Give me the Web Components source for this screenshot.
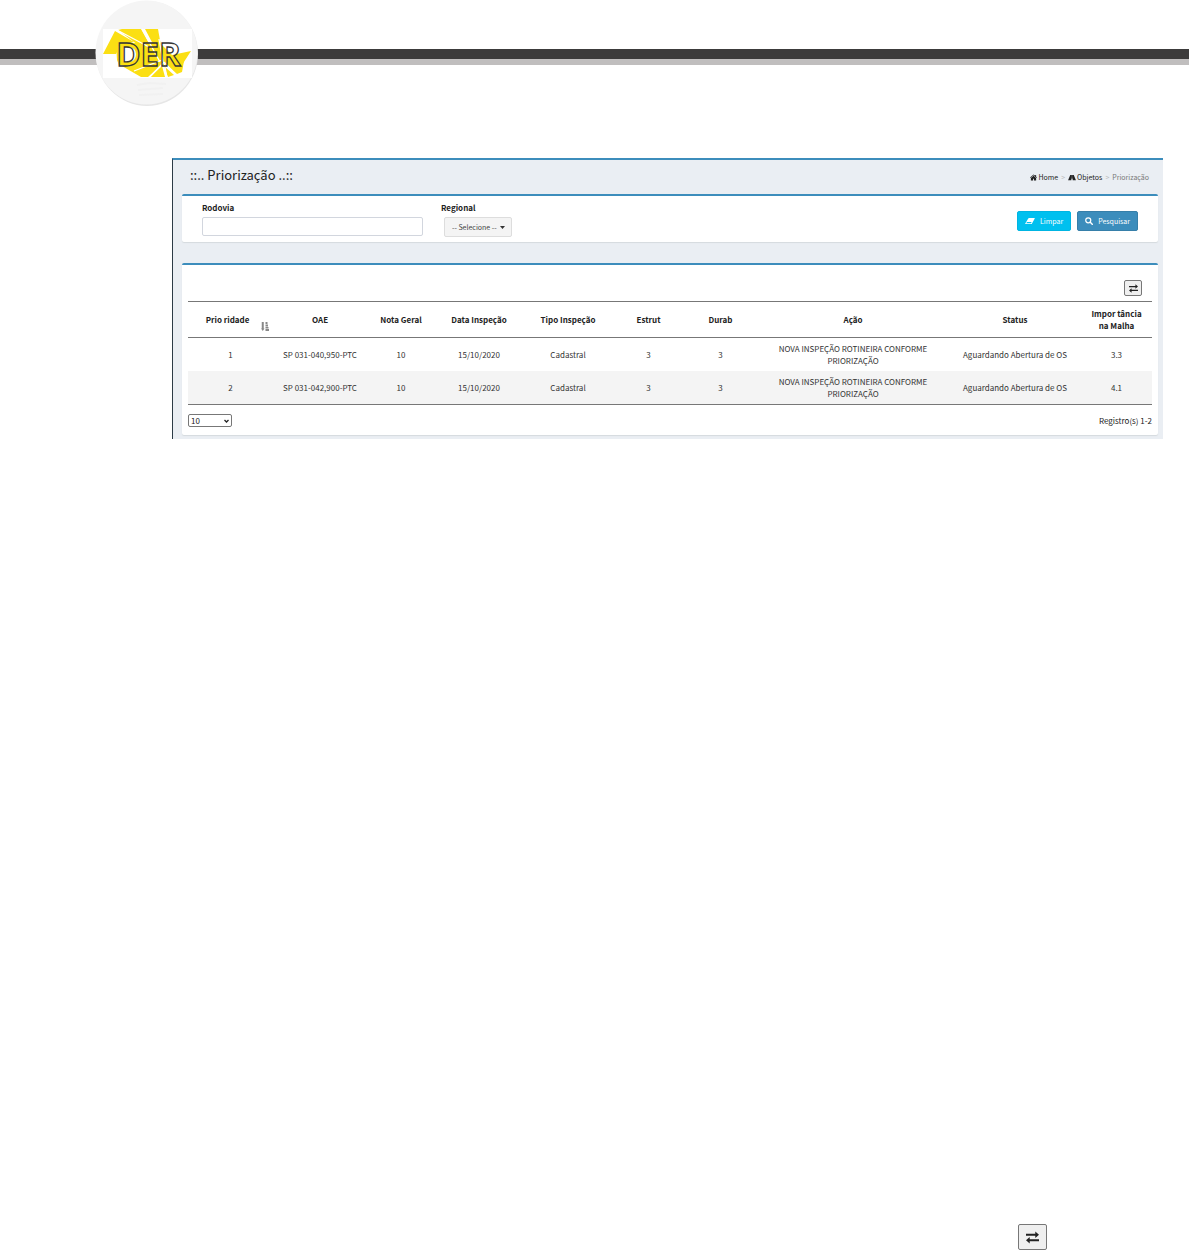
<!DOCTYPE html>
<html lang="pt-BR">
<head>
<meta charset="utf-8">
<meta name="viewport" content="width=device-width, initial-scale=1">
<title>Priorização</title>
<style>
body { margin: 0; background: #fff; color: #222; font: 8px/12px "Noto Sans CJK JP", "Noto Sans", sans-serif; }
</style>
</head>
<body>
<der-page>
  <der-banner slot="banner"></der-banner>
  <der-panel heading="::.. Priorização ..::">
    <der-breadcrumb slot="trail"></der-breadcrumb>
    <der-box><der-filter></der-filter></der-box>
    <der-box><der-results></der-results></der-box>
  </der-panel>
  <swap-button slot="footer" size="large"></swap-button>
</der-page>
<script>
const define = (name, html, setup) => customElements.define(name, class extends HTMLElement {
  connectedCallback() {
    if (this.shadowRoot) return;
    const t = document.createElement('template');
    t.innerHTML = '<style>*{box-sizing:border-box}svg{display:block}button,input,select{font:inherit;color:inherit;margin:0}</style>' + html;
    this.attachShadow({ mode: 'open' }).append(t.content.cloneNode(true));
    if (setup) setup(this, this.shadowRoot);
  }
});

define('der-page', `
<style>
:host { display: flex; flex-direction: column; min-height: 100vh; }
main { padding: 52px 26px 0 172px; }
footer { margin-top: auto; display: flex; justify-content: flex-end; padding-right: 142px; }
</style>
<slot name="banner"></slot>
<main><slot></slot></main>
<footer><slot name="footer"></slot></footer>`);

define('der-banner', `
<style>
:host { display: grid; align-items: start; }
.bar, svg { grid-area: 1 / 1; }
.bar { margin-top: 49px; height: 16px; background: #3c3b3b; border-bottom: 6px solid #c0bebe; }
svg { margin-left: 94px; }
</style>
<div class="bar"></div>
<svg width="106" height="106" viewBox="94 0 106 106" role="img" aria-label="DER">
  <ellipse cx="147" cy="53.500" rx="51" ry="52.500" fill="#e6e6e6"/>
  <ellipse cx="146.500" cy="52.500" rx="51" ry="52" fill="#f5f5f5"/>
  <rect x="103" y="29" width="89" height="49" fill="#fff"/>
  <g fill="#fbdf13">
    <path d="M103 54L115 31L134 42L120 46L116 54Z"/>
    <path d="M118 30L122 29H141L150 45H138Z"/>
    <path d="M145 29H158L161 46L153 44Z"/>
    <path d="M116 43H160L172 55L191 51L182 65H119L117 60Z"/>
    <path d="M122 66L160 50L162 64L148 77H141Z"/>
    <path d="M150 77L162 66L165 77Z"/>
    <path d="M164 66L174 75L168 77Z"/>
    <path d="M166 64L184 61L182 72L177 74Z"/>
  </g>
  <path d="M117 30L149 47M142 29L160 62M134 71L162 60M149 78L164 62M167 78L164 62M176 75L164 62M159 39L163 62" stroke="#fff" stroke-width="1.300" fill="none"/>
  <path d="M124 47H129Q136 48 136 54Q136 61 129 62H124Z" fill="#fff"/>
  <text x="148.500" y="66" text-anchor="middle" font-family="Open Sans, Liberation Sans, sans-serif" font-weight="700" font-size="33" fill="none" stroke="#363636" stroke-width="1.300">DER</text>
  <path d="M137 85l12-2 17 1M138 90l25-2M139 95l24-1" stroke="#f1f1f1" stroke-width="2" fill="none"/>
</svg>`);

define('der-panel', `
<style>
:host { display: block; background: #eaeef3; border-top: 2px solid #3c8dbc; border-left: 1px solid #2c3b46; padding: 0 5px 4px 9px; }
header { display: flex; align-items: center; justify-content: space-between; height: 34px; padding: 0 9px 0 8px; }
h1 { margin: 0; font-size: 13px; line-height: 20px; font-weight: 400; padding-bottom: 4px; }
.boxes { display: flex; flex-direction: column; gap: 21px; }
</style>
<header><h1></h1><slot name="trail"></slot></header>
<div class="boxes"><slot></slot></div>`, (el, root) => {
  root.querySelector('h1').textContent = el.getAttribute('heading');
});

define('der-box', `
<style>
:host { display: block; background: #fff; border-top: 2px solid #3c8dbc; border-radius: 2px; box-shadow: 0 1px 1px #d5dade; }
</style><slot></slot>`);

define('der-breadcrumb', `
<style>
:host { display: block; font-size: 7px; }
nav, a { display: flex; align-items: center; }
nav { gap: 3px; }
a { color: #222; text-decoration: none; gap: 1px; }
i { color: #bbb; font-style: normal; }
span { color: #777; }
</style>
<nav aria-label="Trilha">
  <a href="#home"><svg width="7" height="7" viewBox="0 0 16 16" fill="#222"><path d="M8 1L0 8l1 1 7-6 7 6 1-1-2-2V2h-2v2z"/><path d="M8 4L2 9v6h5v-4h2v4h5V9z"/></svg>Home</a>
  <i>&gt;</i>
  <a href="#objetos"><svg width="8" height="7" viewBox="0 0 18 16" fill="#222"><path fill-rule="evenodd" d="M5 2h3.600v2h.8V2H13l5 12h-7.500v-4h-3v4H0zM8.500 5.500L8.200 8h1.600l-.3-2.500z"/></svg>Objetos</a>
  <i>&gt;</i>
  <span>Priorização</span>
</nav>`);

define('der-filter', `
<style>
:host { display: block; }
form { display: flex; align-items: flex-start; height: 46px; padding: 6px 20px 0; }
.field { display: flex; flex-direction: column; gap: 3px; }
.rodovia { width: 221px; margin-right: 18px; }
label { font-weight: 700; }
input { height: 19px; width: 100%; border: 1px solid #d2d6de; border-radius: 2px; background: #fff; padding: 0 6px; }
.pick { display: grid; align-items: center; margin-left: 3px; width: 68px; }
.pick > * { grid-area: 1 / 1; }
.pick svg { justify-self: end; margin-right: 7px; pointer-events: none; }
select { appearance: none; height: 20px; width: 100%; padding: 0 7px; border: 1px solid #ddd; border-radius: 2px; background: #f4f4f4; color: #444; font-size: 7px; }
.actions { margin: 9px 0 0 auto; display: flex; gap: 6px; }
button { display: flex; align-items: center; gap: 5px; height: 20px; padding: 0 7px; border: 1px solid #00b5e2; border-radius: 2px; background: #00c0ef; color: #fff; font-size: 7px; }
button.search { background: #3c8dbc; border-color: #367fa9; }
</style>
<form>
  <div class="field rodovia"><label for="rodovia">Rodovia</label><input id="rodovia" type="text"></div>
  <div class="field"><label for="regional">Regional</label>
    <div class="pick"><select id="regional"><option>-- Selecione --</option></select>
    <svg width="5" height="3" viewBox="0 0 5 3"><path d="M0 0h5L2.500 3z" fill="#333"/></svg></div></div>
  <div class="actions">
    <button type="button"><svg width="10" height="8" viewBox="0 0 20 16"><path d="M8 2h11q1 0 .5 1L14 13q-.5 1-1.500 1H1q-1 0-.5-1L6.500 3Q7 2 8 2zM2.500 12.500h9L13.500 10H4z" fill="#fff" fill-rule="evenodd"/></svg>Limpar</button>
    <button type="button" class="search"><svg width="8" height="8" viewBox="0 0 16 16" fill="none" stroke="#fff"><circle cx="6.500" cy="6.500" r="5" stroke-width="2.500"/><path d="M10.500 10.500l4 4" stroke-width="3" stroke-linecap="round"/></svg>Pesquisar</button>
  </div>
</form>`);

define('swap-button', `
<style>
:host { display: block; --w: 18px; --h: 16px; --i: 9px; }
:host([size="large"]) { --w: 29px; --h: 26px; --i: 13px; }
button { display: flex; align-items: center; justify-content: center; width: var(--w); height: var(--h); padding: 0; border: 1px solid #777; border-radius: 2px; background: #efefef; }
svg { width: var(--i); height: var(--i); }
</style>
<button type="button" aria-label="Alternar visualização"><svg viewBox="0 0 14 14" fill="#222"><path d="M0 3h10V.5L14 4 10 7.500V5H0zM14 9H4V6.500L0 10l4 3.500V11h10z"/></svg></button>`);

define('der-results', `
<style>
:host { display: block; padding: 15px 6px 8px; }
.tools { display: flex; justify-content: flex-end; padding: 0 10px 5px; }
table { width: 100%; table-layout: fixed; border-collapse: separate; border-spacing: 0; text-align: center; border-bottom: 1px solid #777; }
th { height: 37px; padding: 0 8px; border: solid #777; border-width: 1px 0; }
td { height: 33px; padding: 0 12px; color: #333; }
td.tight { padding: 0; }
tbody tr:nth-child(even) { background: #f4f4f4; }
th.sort { padding: 0 4px 0 6px; }
.sort div { display: flex; align-items: center; }
.sort span { flex: 1; }
.sort svg { margin-top: 13px; }
.foot { display: flex; justify-content: space-between; align-items: center; padding-top: 9px; }
select { width: 44px; height: 13px; border: 1px solid #777; border-radius: 2px; background: #fff; appearance: none; padding: 0 2px; line-height: 11px; }
.pick { display: grid; align-items: center; }
.pick > * { grid-area: 1 / 1; }
.pick svg { justify-self: end; margin-right: 3px; pointer-events: none; }
</style>
<div class="tools"><swap-button></swap-button></div>
<table><colgroup></colgroup><thead><tr></tr></thead><tbody></tbody></table>
<div class="foot">
  <div class="pick"><select aria-label="Registros por página"><option>10</option></select>
  <svg width="5" height="4" viewBox="0 0 5 4"><path d="M.5 1L2.500 3 4.500 1" fill="none" stroke="#222" stroke-width="1.300"/></svg></div>
  <span>Registro(s) 1-2</span>
</div>`, (el, root) => {
  const cols = [['Prio ridade', 85], ['OAE', 94], ['Nota Geral', 68], ['Data Inspeção', 88], ['Tipo Inspeção', 90], ['Estrut', 71], ['Durab', 73], ['Ação', 192], ['Status', 132], ['Impor tância na Malha', 71]];
  const acao = 'NOVA INSPEÇÃO ROTINEIRA CONFORME PRIORIZAÇÃO';
  const rows = [
    ['1', 'SP 031-040,950-PTC', '10', '15/10/2020', 'Cadastral', '3', '3', acao, 'Aguardando Abertura de OS', '3.3'],
    ['2', 'SP 031-042,900-PTC', '10', '15/10/2020', 'Cadastral', '3', '3', acao, 'Aguardando Abertura de OS', '4.1']
  ];
  const icon = '<svg width="8" height="9" viewBox="0 0 16 18" fill="#888"><path d="M1.500 0h4v13H7l-3.500 5L0 13h1.500zM9 0h4v4H9zM9 5h5v4H9zM9 10h6v3H9zM9 14h7v4H9z"/></svg>';
  root.querySelector('colgroup').innerHTML = cols.map(c => `<col width="${c[1]}">`).join('');
  root.querySelector('thead tr').innerHTML = cols.map((c, i) => i ? `<th scope="col">${c[0]}</th>` : `<th scope="col" class="sort" aria-sort="ascending"><div><span>${c[0]}</span>${icon}</div></th>`).join('');
  root.querySelector('tbody').innerHTML = rows.map(r => '<tr>' + r.map((v, i) => `<td${i === 7 ? '' : ' class="tight"'}>${v}</td>`).join('') + '</tr>').join('');
});
</script>
</body>
</html>
